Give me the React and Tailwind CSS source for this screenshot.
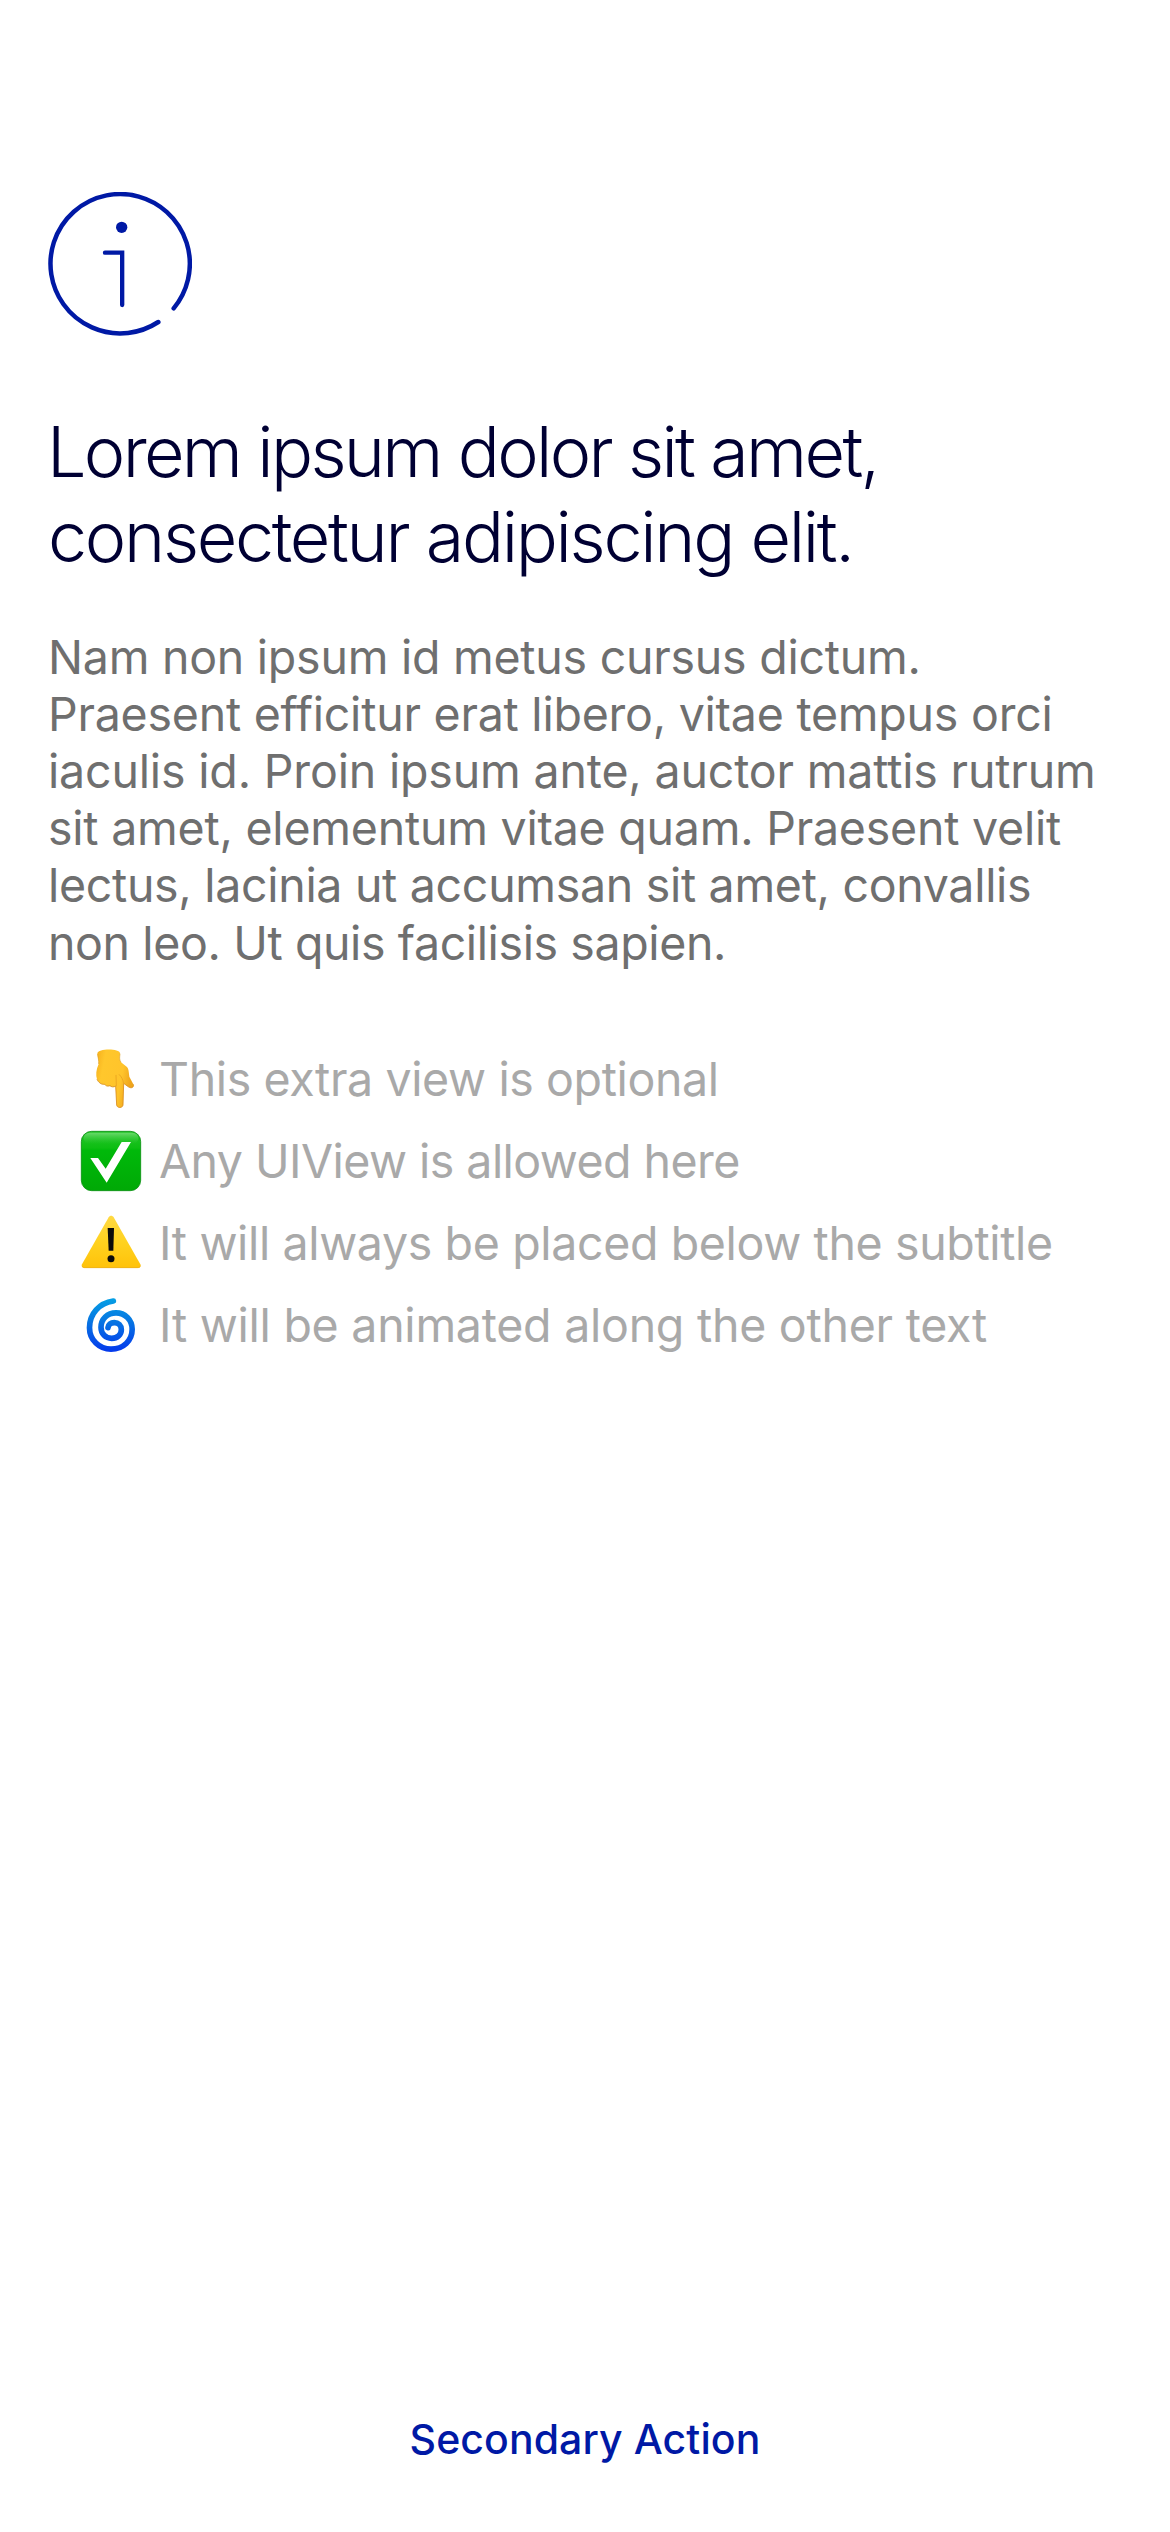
function InfoIcon() {
  return (
    <svg className="h-36 w-36 shrink-0" viewBox="54 66 432 432" fill="none" stroke="#0019A5" strokeWidth="13.5" strokeLinecap="round" aria-hidden="true">
      <path d="M431 415A209 209 0 1 0 385 456" />
      <path d="M225 248H276.500V405" strokeWidth="13" />
      <circle cx="275" cy="172" r="17" fill="#0019A5" stroke="none" />
    </svg>
  );
}

function PointDown() {
  return (
    <svg className="size-[62px] shrink-0" viewBox="30 39 186 186" aria-hidden="true">
      <defs>
        <linearGradient id="skin" x1="0" y1="0" x2="1" y2="0.3">
          <stop offset="0" stopColor="#F5AE1B" />
          <stop offset="0.25" stopColor="#FFC72C" />
          <stop offset="0.75" stopColor="#FFC42B" />
          <stop offset="1" stopColor="#EFA51B" />
        </linearGradient>
      </defs>
      <path d="M82 56C83 40 149 40 150 55C149 67 147 73 153 82L171 96C176 101 176 110 178 125L190 148C193 157 184 161 176 156L161 145L159 210C158 220 141 220 140 210L137 153C132 157 124 156 120 152C112 155 107 152 104 148C94 149 86 143 81 133C77 120 78 104 86 87C87 76 83 67 82 56Z" fill="url(#skin)" />
      <path d="M137 153L140 210C141 220 158 220 159 210L161 145L176 156C184 161 193 157 190 148" fill="none" stroke="#D98A17" strokeWidth="2.500" />
      <path d="M81 133C86 143 94 149 104 148C107 152 112 155 120 152C124 156 132 157 137 153" fill="none" stroke="#DB9422" strokeWidth="3" />
      <path d="M138 121L139 152M161 145C159 134 155 126 148 119" fill="none" stroke="#EDA821" strokeWidth="3" strokeLinecap="round" />
      <path d="M83 57C84 68 87 76 86 87M150 56C149 67 147 73 153 82" fill="none" stroke="#DFA12B" strokeWidth="2" />
    </svg>
  );
}

function CheckMark() {
  return (
    <svg className="size-[62px] shrink-0" viewBox="30 45 186 186" aria-hidden="true">
      <defs>
        <linearGradient id="green" x1="0" y1="0" x2="0" y2="1">
          <stop offset="0" stopColor="#27C52B" />
          <stop offset="0.28" stopColor="#0DBE12" />
          <stop offset="0.32" stopColor="#00B90A" />
          <stop offset="1" stopColor="#00A906" />
        </linearGradient>
        <linearGradient id="gloss" x1="0" y1="0" x2="0" y2="1">
          <stop offset="0" stopColor="#7FE080" stopOpacity="0.75" />
          <stop offset="1" stopColor="#3CCB40" stopOpacity="0" />
        </linearGradient>
      </defs>
      <rect x="34" y="49" width="178" height="178" rx="31" fill="url(#green)" stroke="#078F10" strokeWidth="2.500" />
      <rect x="41" y="53" width="164" height="34" rx="17" fill="url(#gloss)" />
      <path d="M61 129H84L107 161L155 81H183L110 203Z" fill="#fff" />
    </svg>
  );
}

function Warning() {
  return (
    <svg className="size-[62px] shrink-0" viewBox="30 36 186 186" aria-hidden="true">
      <defs>
        <linearGradient id="amber" x1="0" y1="0" x2="0" y2="1">
          <stop offset="0" stopColor="#FFD943" />
          <stop offset="0.5" stopColor="#FFD21F" />
          <stop offset="1" stopColor="#FFC20A" />
        </linearGradient>
      </defs>
      <path d="M116 52C120 46 127 46 131 52L211 193C214 199 211 204 204 204H43C36 204 33 199 36 193Z" fill="url(#amber)" />
      <path d="M37 198C39 203 42 203 46 203H202C207 203 210 202 211 197" fill="none" stroke="#E9AC22" strokeWidth="2" />
      <path d="M113 84H132L130 152H116Z" fill="#0b0b0b" />
      <circle cx="123" cy="176" r="10.500" fill="#0b0b0b" />
    </svg>
  );
}

function Cyclone() {
  return (
    <svg className="size-[62px] shrink-0" viewBox="30 42 186 186" aria-hidden="true">
      <defs>
        <linearGradient id="swirl" gradientUnits="userSpaceOnUse" x1="0" y1="54" x2="0" y2="216">
          <stop offset="0" stopColor="#05A0E4" />
          <stop offset="0.4" stopColor="#0779E2" />
          <stop offset="1" stopColor="#0438EC" />
        </linearGradient>
      </defs>
      <path d="M130 63C88 69 58.500 101 58.500 143C58.500 180 88 207.500 123 207.500C160 207.500 186.500 182 186.500 148C186.500 119 165 98.500 138 98.500C112 98.500 93 117 93 142C93 162 107 175 125 175C142 175 154 164 154 149C154 136 145 128 133 128C122 128 115 134 114 143" fill="none" stroke="url(#swirl)" strokeWidth="17" strokeLinecap="round" strokeLinejoin="round" />
    </svg>
  );
}

const paragraph = [
  { text: "Nam non ipsum id metus cursus dictum.", tracking: "tracking-[-0.25px]" },
  { text: "Praesent efficitur erat libero, vitae tempus orci", tracking: "tracking-[-0.233px]" },
  { text: "iaculis id. Proin ipsum ante, auctor mattis rutrum", tracking: "tracking-[-0.165px]" },
  { text: "sit amet, elementum vitae quam. Praesent velit", tracking: "tracking-[-0.227px]" },
  { text: "lectus, lacinia ut accumsan sit amet, convallis", tracking: "tracking-[-0.304px]" },
  { text: "non leo. Ut quis facilisis sapien.", tracking: "tracking-[-0.385px]" },
];

const notes = [
  { Icon: PointDown, text: "This extra view is optional", tracking: "tracking-[-0.38px]" },
  { Icon: CheckMark, text: "Any UIView is allowed here", tracking: "tracking-[-0.536px]" },
  { Icon: Warning, text: "It will always be placed below the subtitle", tracking: "tracking-[-0.36px]" },
  { Icon: Cyclone, text: "It will be animated along the other text", tracking: "tracking-[-0.25px]" },
];

export default function App() {
  return (
    <main className="flex h-[2532px] w-[1170px] flex-col bg-white px-12 pt-48 pb-[68px] font-['Inter',sans-serif] whitespace-nowrap">
      <InfoIcon />
      <h1 className="mt-[73px] text-[70px] leading-[85px] font-light text-[#000033]">
        <span className="-ml-px block tracking-[-2.68px]">Lorem ipsum dolor sit amet,</span>
        <span className="block tracking-[-2.31px]">consectetur adipiscing elit.</span>
      </h1>
      <p className="mt-[49.5px] text-[46.5px] leading-[57.2px] text-[#6f6f6f]">
        {paragraph.map(({ text, tracking }) => (
          <span key={text} className={`block ${tracking}`}>{text}</span>
        ))}
      </p>
      <ul className="mt-[66px] pl-8 text-[46.5px] text-[#a9a9a9]">
        {notes.map(({ Icon, text, tracking }) => (
          <li key={text} className="flex h-[82px] items-center gap-[17px]">
            <Icon />
            <span className={`leading-[56px] ${tracking}`}>{text}</span>
          </li>
        ))}
      </ul>
      <button type="button" className="mt-auto self-center text-[41px] leading-[50px] font-medium tracking-[0.09px] text-[#0019A5]">
        Secondary Action
      </button>
    </main>
  );
}
